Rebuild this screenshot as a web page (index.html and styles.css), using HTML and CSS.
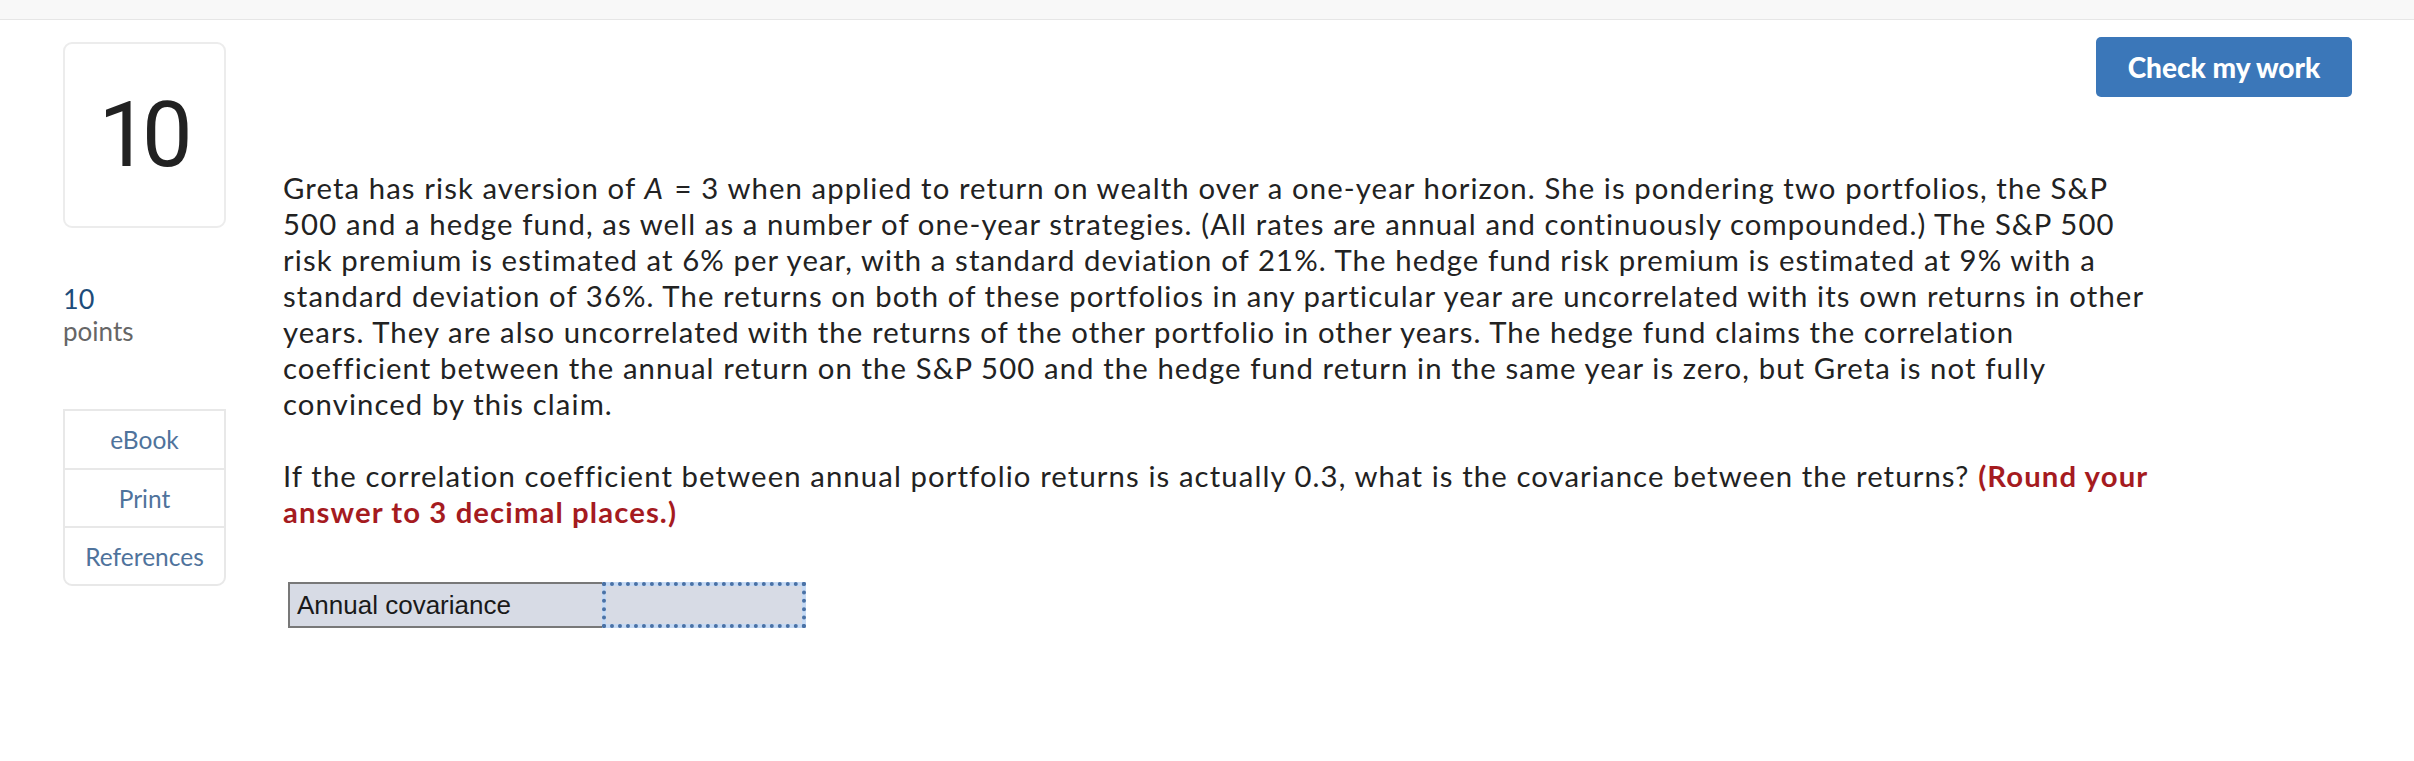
FILE: index.html
```html
<!DOCTYPE html>
<html lang="en">
<head>
<meta charset="utf-8">
<title>Question 10</title>
<link rel="stylesheet" href="styles.css">
</head>
<body>
<div class="topbar"></div>
<div class="page">
  <aside class="sidebar">
    <div class="qnum">10</div>
    <div class="points">
      <div class="points-val">10</div>
      <div class="points-label">points</div>
    </div>
    <nav class="links">
      <div class="link">eBook</div>
      <div class="link">Print</div>
      <div class="link">References</div>
    </nav>
  </aside>
  <main class="content">
    <div class="actions">
      <button class="check-btn">Check my work</button>
    </div>
    <div class="question">
      <p class="para">Greta has risk aversion of <i class="var">A</i> = 3 when applied to return on wealth over a one-year horizon. She is pondering two portfolios, the S&amp;P 500 and a hedge fund, as well as a number of one-year strategies. (All rates are annual and continuously compounded.) The S&amp;P 500 risk premium is estimated at 6% per year, with a standard deviation of 21%. The hedge fund risk premium is estimated at 9% with a standard deviation of 36%. The returns on both of these portfolios in any particular year are uncorrelated with its own returns in other years. They are also uncorrelated with the returns of the other portfolio in other years. The hedge fund claims the correlation coefficient between the annual return on the S&amp;P 500 and the hedge fund return in the same year is zero, but Greta is not fully convinced by this claim.</p>
      <p class="para">If the correlation coefficient between annual portfolio returns is actually 0.3, what is the covariance between the returns? <strong class="hint">(Round your answer to 3 decimal places.)</strong></p>
    </div>
    <div class="answer-table">
      <div class="label-cell">Annual covariance</div>
      <div class="input-cell"></div>
    </div>
  </main>
</div>
</body>
</html>
```

FILE: styles.css
```css
* { box-sizing: border-box; }

html, body {
  margin: 0;
  padding: 0;
  background: #ffffff;
}

body {
  font-family: Lato, "Open Sans", sans-serif;
  color: #222222;
}

.topbar {
  height: 20px;
  background: #f8f8f8;
  border-bottom: 1px solid #e6e6e6;
}

.page {
  display: grid;
  grid-template-columns: 163px 1fr;
  column-gap: 57px;
  padding: 17px 62px 0 63px;
}

.sidebar {
  display: flex;
  flex-direction: column;
  padding-top: 5px;
}

.qnum {
  height: 186px;
  border: 2px solid #ececec;
  border-radius: 9px;
  display: flex;
  align-items: center;
  justify-content: center;
  font-family: Roboto, "Open Sans", sans-serif;
  font-size: 90px;
  color: #222222;
  letter-spacing: -7px;
  padding-right: 5px;
}

.points {
  margin-top: 54px;
}

.points-val {
  font-size: 27px;
  line-height: 33px;
  color: #1d4c7a;
}

.points-label {
  font-size: 26px;
  line-height: 33px;
  color: #666666;
}

.links {
  margin-top: 61px;
  border: 2px solid #e8e8e8;
  border-radius: 0 0 9px 9px;
  display: flex;
  flex-direction: column;
}

.link {
  height: 57px;
  display: flex;
  align-items: center;
  justify-content: center;
  font-size: 24.5px;
  color: #4f739c;
}

.link + .link {
  border-top: 2px solid #e8e8e8;
  height: 58px;
}

.content {
  display: flex;
  flex-direction: column;
  min-width: 0;
}

.actions {
  display: flex;
  justify-content: flex-end;
}

.check-btn {
  width: 256px;
  height: 60px;
  border: none;
  border-radius: 5px;
  background: #3b77b9;
  color: #ffffff;
  font-family: Lato, "Open Sans", sans-serif;
  font-weight: 900;
  font-size: 28px;
  padding: 0;
}

.question {
  max-width: 1870px;
  margin-top: 73px;
}

.para {
  margin: 0;
  font-size: 29.3px;
  line-height: 36px;
  letter-spacing: 1.1px;
}

.var {
  padding-right: 2px;
}

.para + .para {
  margin-top: 36px;
}

.hint {
  color: #a51b1f;
  font-weight: 700;
}

.answer-table {
  display: flex;
  margin-top: 52px;
  margin-left: 5px;
  height: 46px;
}

.label-cell {
  width: 314px;
  background: #d7dbe5;
  border: 2px solid #787878;
  border-right: none;
  display: flex;
  align-items: center;
  padding-left: 7px;
  font-family: "Liberation Sans", Arial, sans-serif;
  font-size: 26px;
  color: #1a1a1a;
}

.input-cell {
  width: 204px;
  border: 4px dotted #4a72a6;
  background: linear-gradient(#d7dbe5, #d7dbe5) padding-box, linear-gradient(#c6daf4, #c6daf4) border-box;
}
```
